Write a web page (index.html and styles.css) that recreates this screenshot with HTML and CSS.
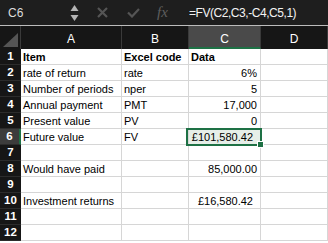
FILE: index.html
```html
<!DOCTYPE html>
<html lang="en">

  <head>
    <meta charset="UTF-8">
    <meta name="viewport" content="width=device-width, initial-scale=1.0">
    <title>FV sheet</title>
    <link rel="stylesheet" href="styles.css">
  </head>

  <body>
    <div class="formula-bar">
      <div class="name-box">C6</div>
      <svg class="stepper" width="9" height="18" viewBox="0 0 9 18">
        <path d="M4.5 1 L8.5 7 L0.5 7 Z" fill="#b5b5b5"/>
        <path d="M0.5 11 L8.5 11 L4.5 17 Z" fill="#b5b5b5"/>
      </svg>
      <svg class="cancel" width="11" height="11" viewBox="0 0 11 11">
        <path d="M1 1 L10 10 M10 1 L1 10" stroke="#555" stroke-width="2.2"/>
      </svg>
      <svg class="enter" width="13" height="10" viewBox="0 0 13 10">
        <path d="M1 4.5 L5 8.5 L12 1" stroke="#555" stroke-width="2.2" fill="none"/>
      </svg>
      <span class="fx">fx</span>
      <div class="formula">=FV(C2,C3,-C4,C5,1)</div>
    </div>

    <div class="sheet">
      <div class="corner"><span class="corner-mark"></span></div>
      <div class="col-head">A</div>
      <div class="col-head">B</div>
      <div class="col-head active">C</div>
      <div class="col-head">D</div>

      <div class="row-head">1</div>
      <div class="cell bold">Item</div>
      <div class="cell bold">Excel code</div>
      <div class="cell bold">Data</div>
      <div class="cell"></div>

      <div class="row-head">2</div>
      <div class="cell">rate of return</div>
      <div class="cell">rate</div>
      <div class="cell num">6%</div>
      <div class="cell"></div>

      <div class="row-head">3</div>
      <div class="cell">Number of periods</div>
      <div class="cell">nper</div>
      <div class="cell num">5</div>
      <div class="cell"></div>

      <div class="row-head">4</div>
      <div class="cell">Annual payment</div>
      <div class="cell">PMT</div>
      <div class="cell num">17,000</div>
      <div class="cell"></div>

      <div class="row-head">5</div>
      <div class="cell">Present value</div>
      <div class="cell">PV</div>
      <div class="cell num">0</div>
      <div class="cell"></div>

      <div class="row-head active">6</div>
      <div class="cell">Future value</div>
      <div class="cell">FV</div>
      <div class="cell num money selected">£101,580.42</div>
      <div class="cell"></div>

      <div class="row-head">7</div>
      <div class="cell"></div>
      <div class="cell"></div>
      <div class="cell"></div>
      <div class="cell"></div>

      <div class="row-head">8</div>
      <div class="cell">Would have paid</div>
      <div class="cell"></div>
      <div class="cell num acct">85,000.00</div>
      <div class="cell"></div>

      <div class="row-head">9</div>
      <div class="cell"></div>
      <div class="cell"></div>
      <div class="cell"></div>
      <div class="cell"></div>

      <div class="row-head">10</div>
      <div class="cell">Investment returns</div>
      <div class="cell"></div>
      <div class="cell num money">£16,580.42</div>
      <div class="cell"></div>

      <div class="row-head">11</div>
      <div class="cell"></div>
      <div class="cell"></div>
      <div class="cell"></div>
      <div class="cell"></div>

      <div class="row-head">12</div>
      <div class="cell"></div>
      <div class="cell"></div>
      <div class="cell"></div>
      <div class="cell"></div>
    </div>
  </body>
</html>
```

FILE: styles.css
```css
body {
    margin: 0;
    background-color: white;
    font-family: "Liberation Sans", Arial, sans-serif;
    overflow: hidden;
  }

  .formula-bar {
    display: flex;
    align-items: center;
    height: 25px;
    background-color: #1e1e1e;
    border-bottom: 1px solid #bcbcbc;
  }

  .name-box {
    width: 70px;
    box-sizing: border-box;
    padding-left: 8px;
    font-size: 12px;
    color: #dcdcdc;
  }

  .cancel {
    margin-left: 18px;
  }

  .enter {
    margin-left: 19px;
  }

  .fx {
    margin-left: 17px;
    width: 14px;
    font-family: "Liberation Serif", serif;
    font-style: italic;
    font-size: 15px;
    color: #5e5e5e;
  }

  .formula {
    margin-left: 18px;
    font-size: 12px;
    letter-spacing: -0.45px;
    color: #f2f2f2;
  }

  .sheet {
    display: grid;
    grid-template-columns: 21px 101px 67px 72px 67px;
    grid-template-rows: 23px repeat(12, 16px);
  }

  .corner {
    position: relative;
    background-color: #161616;
    border-right: 1px solid #3a3a3a;
  }

  .corner-mark {
    position: absolute;
    right: 2px;
    bottom: 2px;
    width: 0;
    height: 0;
    border-left: 15px solid transparent;
    border-bottom: 14px solid #555;
  }

  .col-head {
    display: flex;
    align-items: center;
    justify-content: center;
    padding-top: 3px;
    background-color: #161616;
    border-right: 1px solid #3a3a3a;
    color: white;
    font-size: 12px;
  }

  .col-head.active {
    background-color: #4a4a4a;
    border-bottom: 2px solid #1e7145;
    padding-top: 5px;
  }

  .row-head {
    box-sizing: border-box;
    background-color: #161616;
    border-bottom: 1px solid #2c2c2c;
    color: white;
    font-size: 11.5px;
    font-weight: bold;
    text-align: center;
    line-height: 15px;
  }

  .row-head.active {
    background-color: #3c3c3c;
    border-right: 2px solid #1e7145;
  }

  .cell {
    box-sizing: border-box;
    padding: 2px 2px 0;
    border-right: 1px solid #d6d6d6;
    border-bottom: 1px solid #d6d6d6;
    font-size: 11px;
    line-height: 13px;
    color: black;
    white-space: nowrap;
  }

  .bold {
    font-weight: bold;
  }

  .num {
    text-align: right;
    padding-right: 3px;
  }

  .money {
    padding-right: 7px;
  }

  .acct {
    padding-right: 3px;
  }

  .selected {
    position: relative;
    background-color: #e6eee8;
  }

  .selected::after {
    content: "";
    position: absolute;
    top: -1px;
    left: -3px;
    right: -2px;
    bottom: -2px;
    border: 2px solid #1e7145;
  }

  .selected::before {
    content: "";
    position: absolute;
    right: -4px;
    bottom: -4px;
    width: 5px;
    height: 5px;
    background-color: #1e7145;
    border: 1px solid white;
    z-index: 1;
  }
```
